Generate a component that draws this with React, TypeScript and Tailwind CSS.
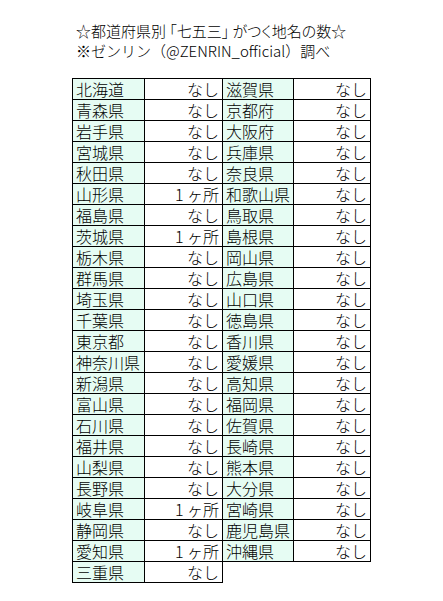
const left: [string, string][] = [
  ["北海道", "なし"],
  ["青森県", "なし"],
  ["岩手県", "なし"],
  ["宮城県", "なし"],
  ["秋田県", "なし"],
  ["山形県", "1 ヶ所"],
  ["福島県", "なし"],
  ["茨城県", "1 ヶ所"],
  ["栃木県", "なし"],
  ["群馬県", "なし"],
  ["埼玉県", "なし"],
  ["千葉県", "なし"],
  ["東京都", "なし"],
  ["神奈川県", "なし"],
  ["新潟県", "なし"],
  ["富山県", "なし"],
  ["石川県", "なし"],
  ["福井県", "なし"],
  ["山梨県", "なし"],
  ["長野県", "なし"],
  ["岐阜県", "1 ヶ所"],
  ["静岡県", "なし"],
  ["愛知県", "1 ヶ所"],
  ["三重県", "なし"],
]

const right: [string, string][] = [
  ["滋賀県", "なし"],
  ["京都府", "なし"],
  ["大阪府", "なし"],
  ["兵庫県", "なし"],
  ["奈良県", "なし"],
  ["和歌山県", "なし"],
  ["鳥取県", "なし"],
  ["島根県", "なし"],
  ["岡山県", "なし"],
  ["広島県", "なし"],
  ["山口県", "なし"],
  ["徳島県", "なし"],
  ["香川県", "なし"],
  ["愛媛県", "なし"],
  ["高知県", "なし"],
  ["福岡県", "なし"],
  ["佐賀県", "なし"],
  ["長崎県", "なし"],
  ["熊本県", "なし"],
  ["大分県", "なし"],
  ["宮崎県", "なし"],
  ["鹿児島県", "なし"],
  ["沖縄県", "なし"],
]

function Column({ rows, nameW, valW }: { rows: [string, string][]; nameW: string; valW: string }) {
  return (
    <div className="flex flex-col border-t border-l border-black">
      {rows.map(([name, val]) => (
        <div key={name} className="flex h-[21px] border-b border-black">
          <div className={`${nameW} bg-[#e6fcf3] border-r border-black pl-[3px] leading-[20px]`}>{name}</div>
          <div className={`${valW} border-r border-black pr-[3px] text-right leading-[20px]`}>{val}</div>
        </div>
      ))}
    </div>
  )
}

export default function App() {
  return (
    <div
      className="w-[443px] h-[601px] bg-white text-black text-[16px] font-light"
      style={{ fontFamily: '"Noto Sans CJK JP", "Noto Sans", sans-serif' }}
    >
      <div className="pt-[21px] pl-[76px] leading-[20px] text-[15px]">
        <p className="[font-feature-settings:'palt']">☆都道府県別 「七五三」 がつく地名の数☆</p>
        <p>※ゼンリン（@ZENRIN_official）調べ</p>
      </div>
      <div className="flex items-start mt-[17px] ml-[72px]">
        <Column rows={left} nameW="w-[72px]" valW="w-[78px]" />
        <div className="-ml-px">
          <Column rows={right} nameW="w-[71px]" valW="w-[77px]" />
        </div>
      </div>
    </div>
  )
}
